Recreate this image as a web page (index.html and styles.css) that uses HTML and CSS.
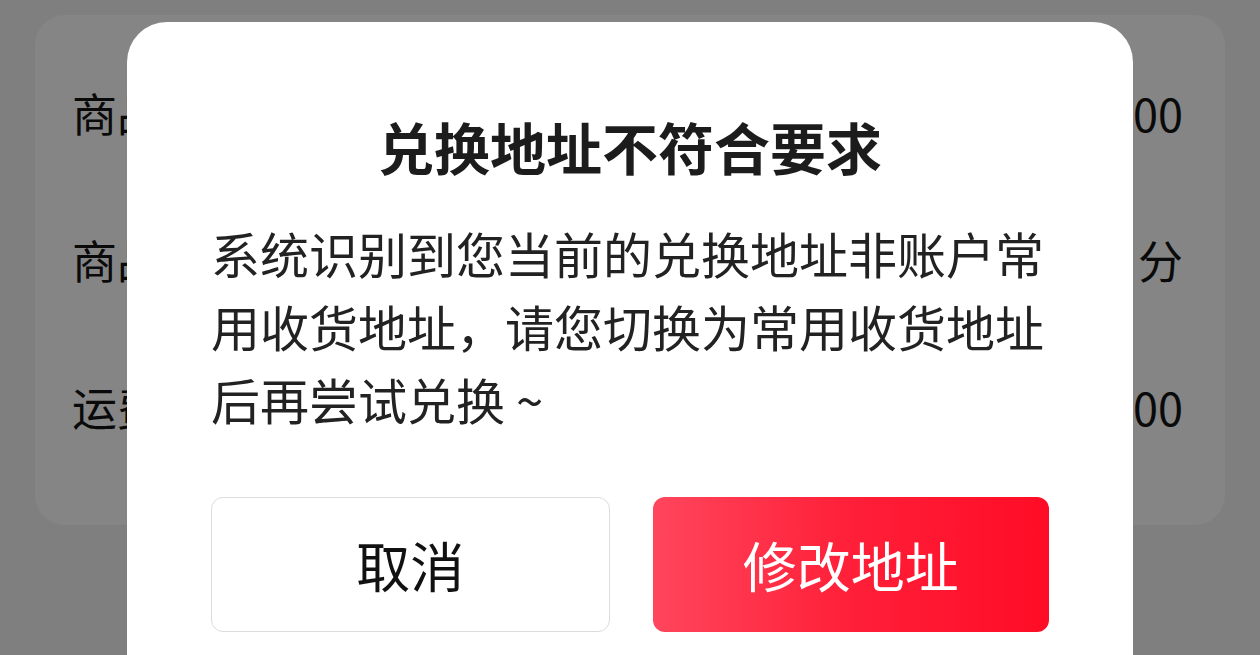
FILE: index.html
```html
<!DOCTYPE html>
<html lang="zh-CN">
<head>
<meta charset="utf-8">
<title>兑换地址不符合要求</title>
<link rel="stylesheet" href="styles.css">
</head>
<body>
<div class="page">
  <div class="card">
    <div class="row"><span class="label">商品价格</span><span class="value">¥99.00</span></div>
    <div class="row"><span class="label">商品积分</span><span class="value">999 分</span></div>
    <div class="row"><span class="label">运费</span><span class="value">¥0.00</span></div>
  </div>
</div>
<div class="modal">
  <h2 class="title">兑换地址不符合要求</h2>
  <p class="desc">系统识别到您当前的兑换地址非账户常用收货地址，请您切换为常用收货地址后再尝试兑换 ~</p>
  <div class="actions">
    <button class="btn btn-cancel">取消</button>
    <button class="btn btn-ok">修改地址</button>
  </div>
</div>
</body>
</html>
```
FILE: styles.css
```css
html, body {
  margin: 0;
  padding: 0;
  height: 655px;
  overflow: hidden;
  background: #7f7f7f;
  font-family: "Noto Sans CJK SC", "Noto Sans", sans-serif;
}
.page {
  padding: 15px 35px 0 35px;
}
.card {
  background: #858585;
  border-radius: 30px;
  height: 510px;
  box-sizing: border-box;
  padding: 24px 42px 0 37px;
  display: flex;
  flex-direction: column;
}
.row {
  height: 147px;
  display: flex;
  align-items: center;
  justify-content: space-between;
  font-size: 45px;
  color: #0a0a0a;
}
.modal {
  position: fixed;
  left: 127px;
  top: 22px;
  width: 1006px;
  height: 700px;
  box-sizing: border-box;
  background: #fff;
  border-radius: 40px;
  padding: 86px 84px 0 84px;
}
.title {
  margin: 0;
  text-align: center;
  font-size: 56px;
  line-height: 76px;
  font-weight: 700;
  color: #1c1c1c;
}
.desc {
  margin: 32px 0 0 0;
  font-size: 49px;
  line-height: 73px;
  color: #222;
}
.actions {
  margin-top: 62px;
  display: flex;
  gap: 43px;
}
.btn {
  flex: 1;
  height: 135px;
  border-radius: 12px;
  font-family: "Noto Sans CJK SC", "Noto Sans", sans-serif;
  font-size: 54px;
  padding: 0;
}
.btn-cancel {
  background: #fff;
  border: 1.5px solid #dcdcdc;
  color: #111;
}
.btn-ok {
  background: linear-gradient(90deg, #ff465c 0%, #ff1f38 50%, #ff0c26 100%);
  border: none;
  color: #fff;
}
```
